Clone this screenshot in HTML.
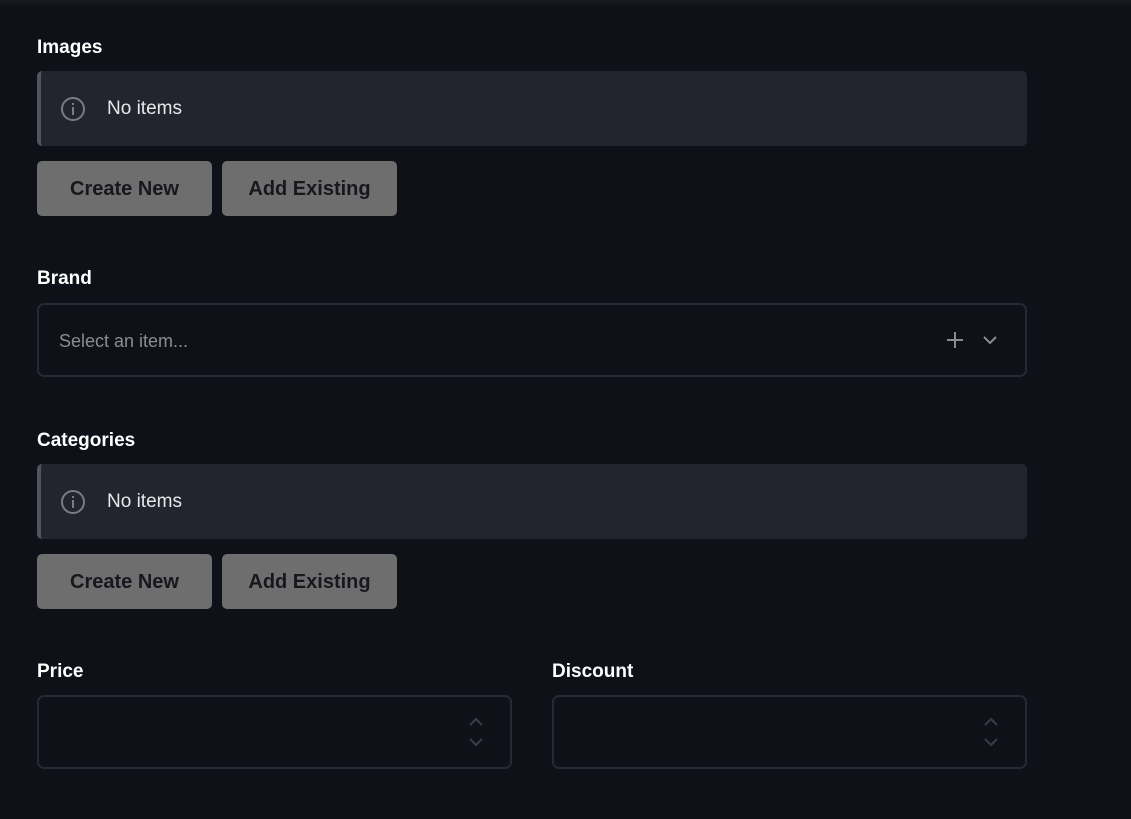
<!DOCTYPE html>
<html><head><style>
*{box-sizing:border-box;margin:0;padding:0}
body{width:1131px;height:819px;background:#0e1118;font-family:"Liberation Sans",sans-serif;position:relative;overflow:hidden}
.top{position:absolute;left:0;top:0;width:1131px;height:8px;background:linear-gradient(#181b22,#0e1118)}
.lbl{position:absolute;left:37px;color:#fff;font-weight:bold;font-size:19px}
.note{position:absolute;left:37px;width:990px;height:75px;background:#22252e;border-radius:5px;border-left:4px solid #52545a}
.note span{position:absolute;left:66px;top:27px;color:#e6e8ec;font-size:19px}
.note svg{position:absolute;left:19px;top:25px}
.btn{position:absolute;height:55px;background:#6e6e6e;border-radius:5px;color:#16181e;font-size:20px;font-weight:bold;text-align:center;line-height:57px}
.box{position:absolute;border:2px solid #262a33;border-radius:7px;height:74px}
</style></head><body>
<div class="top"></div>
<div class="lbl" style="top:37px">Images</div>
<div class="note" style="top:71px"><svg width="26" height="26" viewBox="0 0 26 26"><circle cx="13" cy="13" r="11" fill="none" stroke="#7a7c82" stroke-width="2"/><rect x="12" y="11" width="2" height="8" fill="#7a7c82"/><rect x="12" y="7" width="2" height="2" fill="#7a7c82"/></svg><span>No items</span></div>
<div class="btn" style="left:37px;top:161px;width:175px">Create New</div>
<div class="btn" style="left:222px;top:161px;width:175px">Add Existing</div>
<div class="lbl" style="top:268px">Brand</div>
<div class="box" style="left:37px;top:303px;width:990px"><span style="position:absolute;left:20px;top:26px;color:#8b8d93;font-size:18px">Select an item...</span>
<svg style="position:absolute;left:905px;top:25px" width="60" height="20" viewBox="0 0 60 20"><path d="M3 10H19M11 2V18" stroke="#8a8c92" stroke-width="2"/><path d="M40 7L46 13L52 7" stroke="#8a8c92" stroke-width="2" fill="none"/></svg></div>
<div class="lbl" style="top:430px">Categories</div>
<div class="note" style="top:464px"><svg width="26" height="26" viewBox="0 0 26 26"><circle cx="13" cy="13" r="11" fill="none" stroke="#7a7c82" stroke-width="2"/><rect x="12" y="11" width="2" height="8" fill="#7a7c82"/><rect x="12" y="7" width="2" height="2" fill="#7a7c82"/></svg><span>No items</span></div>
<div class="btn" style="left:37px;top:554px;width:175px">Create New</div>
<div class="btn" style="left:222px;top:554px;width:175px">Add Existing</div>
<div class="lbl" style="top:661px">Price</div>
<div class="lbl" style="top:661px;left:552px">Discount</div>
<div class="box" style="left:37px;top:695px;width:475px"><svg style="position:absolute;left:428px;top:20px" width="18" height="32" viewBox="0 0 18 32"><path d="M3 8L9 2L15 8M3 22L9 28L15 22" stroke="#3a3e47" stroke-width="2" fill="none"/></svg></div>
<div class="box" style="left:552px;top:695px;width:475px"><svg style="position:absolute;left:428px;top:20px" width="18" height="32" viewBox="0 0 18 32"><path d="M3 8L9 2L15 8M3 22L9 28L15 22" stroke="#3a3e47" stroke-width="2" fill="none"/></svg></div>
</body></html>
